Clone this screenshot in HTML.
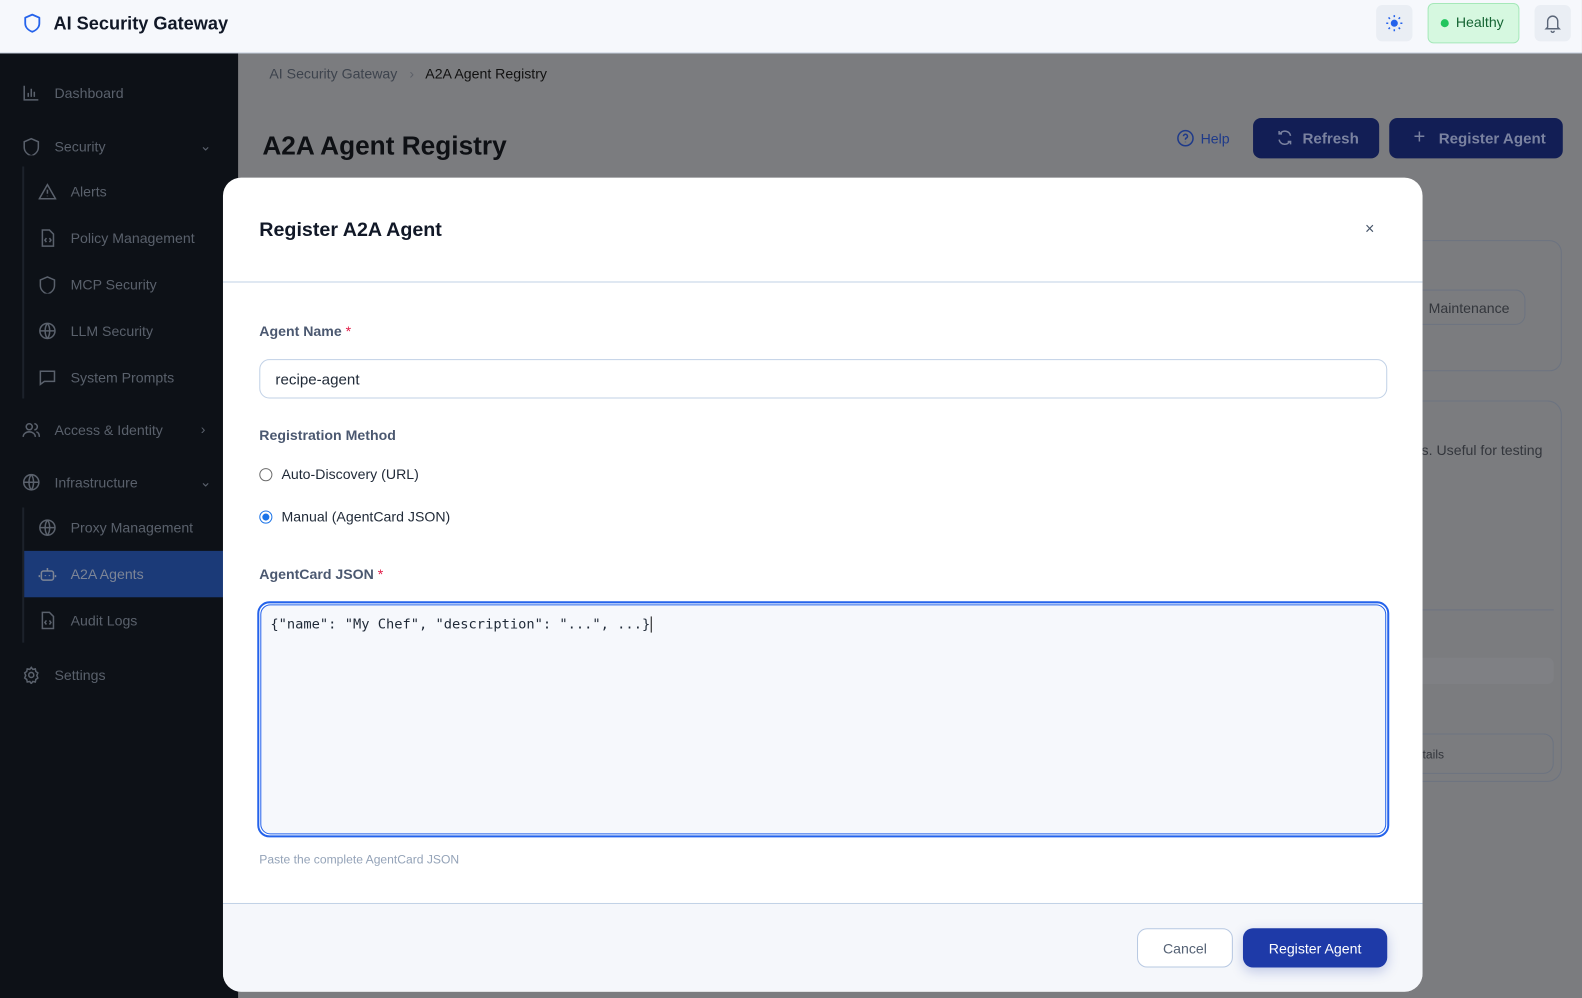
<!DOCTYPE html>
<html><head><meta charset="utf-8"><style>
*{box-sizing:border-box;margin:0;padding:0}
html,body{width:1582px;height:998px;overflow:hidden;background:#7b7c7f}
#w{width:1568px;height:990px;transform:scale(1.0089);transform-origin:0 0;font-family:"Liberation Sans",sans-serif;position:relative}
.a{position:absolute}
.top{left:0;top:0;width:1568px;height:53px;background:#f6f8fc;border-bottom:1px solid #c5cfdd}
.side{left:0;top:53px;width:236px;height:945px;background:#0d1117}
.si{position:absolute;font-size:14px;color:#5a616c;display:flex;align-items:center;gap:14px}
.si svg{width:18px;height:18px;stroke:#5a616c;fill:none;stroke-width:1.5}
.vl{position:absolute;left:22px;width:2px;background:#1c222b}
.modal{left:221px;top:176px;width:1189px;height:807px;background:#fff;border-radius:18px;overflow:hidden}
.lbl{position:absolute;left:36px;font-size:14px;font-weight:bold;color:#4b5870}
.lbl b{color:#e11d48;font-weight:normal}
</style></head><body><div id="w">
<div class="a top">
 <svg class="a" style="left:23px;top:13px" width="18" height="20" viewBox="0 0 18 20"><path d="M9 1.5 L16 4.5 V10 C16 14 13 17 9 18.5 C5 17 2 14 2 10 V4.5 Z" fill="none" stroke="#2563eb" stroke-width="1.8" stroke-linejoin="round"/></svg>
 <div class="a" style="left:53px;top:13px;font-size:18px;font-weight:bold;color:#111827">AI Security Gateway</div>
 <div class="a" style="left:1364px;top:5px;width:36px;height:36px;border-radius:6px;background:#eaeef4"></div>
 <svg class="a" style="left:1373px;top:14px" width="18" height="18" viewBox="0 0 18 18"><circle cx="9" cy="9" r="3.5" fill="#2563eb"/><g stroke="#2563eb" stroke-width="1.5"><path d="M9 1v2M9 15v2M1 9h2M15 9h2M3.3 3.3l1.4 1.4M13.3 13.3l1.4 1.4M3.3 14.7l1.4-1.4M13.3 4.7l1.4-1.4"/></g></svg>
 <div class="a" style="left:1415px;top:3px;width:91px;height:40px;border-radius:6px;background:#d6f8e0;border:1px solid #a5e8b9"></div>
 <div class="a" style="left:1428px;top:19px;width:8px;height:8px;border-radius:50%;background:#22c55e"></div>
 <div class="a" style="left:1443px;top:14px;font-size:14px;color:#166534">Healthy</div>
 <div class="a" style="left:1521px;top:5px;width:36px;height:36px;border-radius:6px;background:#eaeef4"></div>
 <svg class="a" style="left:1530px;top:13px" width="18" height="20" viewBox="0 0 18 20" fill="none" stroke="#5b6678" stroke-width="1.4"><path d="M4 14V8a5 5 0 0 1 10 0v6l1.5 1.5h-13Z"/><path d="M7.5 17.5a1.5 1.5 0 0 0 3 0"/></svg>
</div>
<div class="a side">
 <div class="vl" style="top:112px;height:230px"></div>
 <div class="vl" style="top:450px;height:134px"></div>
 <div class="a" style="left:24px;top:493px;width:212px;height:46px;background:#1b3a78"></div>
 <div class="si" style="left:22px;top:30px"><svg viewBox="0 0 18 18"><path d="M2 2v14h14M6 13V9M9 13V5M12 13V8"/></svg>Dashboard</div>
 <div class="si" style="left:22px;top:83px"><svg viewBox="0 0 18 18"><path d="M9 1.5 16 4.5V10c0 4-3 7-7 8.5C5 17 2 14 2 10V4.5Z"/></svg>Security</div>
 <div class="si" style="left:198px;top:83px">⌄</div>
 <div class="si" style="left:38px;top:128px"><svg viewBox="0 0 18 18"><path d="M9 2 17 16H1Z M9 7v4M9 13v.5"/></svg>Alerts</div>
 <div class="si" style="left:38px;top:174px"><svg viewBox="0 0 18 18"><path d="M4 1h7l4 4v12H4Z M8 9l-1.5 2L8 13M11 9l1.5 2L11 13"/></svg>Policy Management</div>
 <div class="si" style="left:38px;top:220px"><svg viewBox="0 0 18 18"><path d="M9 1.5 16 4.5V10c0 4-3 7-7 8.5C5 17 2 14 2 10V4.5Z"/></svg>MCP Security</div>
 <div class="si" style="left:38px;top:266px"><svg viewBox="0 0 18 18"><circle cx="9" cy="9" r="7.5"/><path d="M1.5 9h15M9 1.5c3 3.5 3 11.5 0 15M9 1.5c-3 3.5-3 11.5 0 15"/></svg>LLM Security</div>
 <div class="si" style="left:38px;top:312px"><svg viewBox="0 0 18 18"><path d="M2 3h14v10H6l-4 3Z"/></svg>System Prompts</div>
 <div class="si" style="left:22px;top:364px"><svg viewBox="0 0 18 18"><circle cx="7" cy="6" r="3"/><path d="M1 16c0-3 3-5 6-5s6 2 6 5M12 3a3 3 0 0 1 0 6M14 11c2 .5 3 2.5 3 5"/></svg>Access &amp; Identity</div>
 <div class="si" style="left:199px;top:364px">›</div>
 <div class="si" style="left:22px;top:416px"><svg viewBox="0 0 18 18"><circle cx="9" cy="9" r="7.5"/><path d="M1.5 9h15M9 1.5c3 3.5 3 11.5 0 15M9 1.5c-3 3.5-3 11.5 0 15"/></svg>Infrastructure</div>
 <div class="si" style="left:198px;top:416px">⌄</div>
 <div class="si" style="left:38px;top:461px"><svg viewBox="0 0 18 18"><circle cx="9" cy="9" r="7.5"/><path d="M1.5 9h15M9 1.5c3 3.5 3 11.5 0 15M9 1.5c-3 3.5-3 11.5 0 15"/></svg>Proxy Management</div>
 <div class="si" style="left:38px;top:507px;color:#7d8596"><svg viewBox="0 0 18 18" style="stroke:#7d8596"><rect x="3" y="6" width="12" height="9" rx="2"/><path d="M9 3v3M1 10v2M17 10v2M7 10v1M11 10v1"/></svg>A2A Agents</div>
 <div class="si" style="left:38px;top:553px"><svg viewBox="0 0 18 18"><path d="M4 1h7l4 4v12H4Z M8 9l-1.5 2L8 13M11 9l1.5 2L11 13"/></svg>Audit Logs</div>
 <div class="si" style="left:22px;top:607px"><svg viewBox="0 0 18 18"><circle cx="9" cy="9" r="2.5"/><path d="M9 1.5l1.5 2 2.5-.5.5 2.5 2 1.5-1 2.5 1 2.5-2 1.5-.5 2.5-2.5-.5-1.5 2-1.5-2-2.5.5-.5-2.5-2-1.5 1-2.5-1-2.5 2-1.5.5-2.5 2.5.5Z"/></svg>Settings</div>
</div>
<div class="a" style="left:267px;top:65px;font-size:14px;color:#3d434d">AI Security Gateway <span style="color:#5c6068;margin:0 8px">›</span> <span style="color:#111">A2A Agent Registry</span></div>
<div class="a" style="left:260px;top:129px;font-size:26px;font-weight:bold;color:#0e1014">A2A Agent Registry</div>
<svg class="a" style="left:1166px;top:128px" width="18" height="18" viewBox="0 0 18 18" fill="none" stroke="#1e3a8a" stroke-width="1.5"><circle cx="9" cy="9" r="7.5"/><path d="M7 7a2 2 0 1 1 2.5 2c-.5.2-.5.7-.5 1.5M9 12.5v.5"/></svg>
<div class="a" style="left:1190px;top:129px;font-size:14px;color:#1e3a8a">Help</div>
<div class="a" style="left:1242px;top:117px;width:125px;height:40px;border-radius:8px;background:#121e55"></div>
<div class="a" style="left:1291px;top:129px;font-size:15px;font-weight:bold;color:#7a82a0">Refresh</div>
<svg class="a" style="left:1265px;top:128px" width="17" height="17" viewBox="0 0 18 18" fill="none" stroke="#7a82a0" stroke-width="1.6"><path d="M15 7a6 6 0 0 0-11-2M3 2v3h3M3 11a6 6 0 0 0 11 2M15 16v-3h-3"/></svg>
<div class="a" style="left:1377px;top:117px;width:172px;height:40px;border-radius:8px;background:#121e55"></div>
<div class="a" style="left:1401px;top:125px;font-size:20px;color:#7a82a0">+</div>
<div class="a" style="left:1426px;top:129px;font-size:15px;font-weight:bold;color:#7a82a0">Register Agent</div>
<div class="a" style="left:1380px;top:238px;width:168px;height:130px;border:1px solid #6c7380;border-radius:12px"></div>
<div class="a" style="left:1380px;top:287px;width:132px;height:35px;border:1px solid #6c7380;border-radius:10px"></div>
<div class="a" style="left:1416px;top:297px;font-size:14px;color:#33363c">Maintenance</div>
<div class="a" style="left:1380px;top:397px;width:168px;height:378px;border:1px solid #6c7380;border-radius:14px"></div>
<div class="a" style="left:1409px;top:438px;font-size:14px;color:#33363c">s. Useful for testing</div>
<div class="a" style="left:1400px;top:604px;width:140px;height:1px;background:#6c7380"></div>
<div class="a" style="left:1400px;top:652px;width:140px;height:26px;border-radius:6px;background:#7f8084"></div>
<div class="a" style="left:1380px;top:727px;width:160px;height:40px;border:1px solid #6c7380;border-radius:10px"></div>
<div class="a" style="left:1410px;top:741px;font-size:12px;color:#33363c">tails</div>

<div class="a modal">
 <div class="a" style="left:36px;top:41px;font-size:19.5px;font-weight:bold;color:#111827">Register A2A Agent</div>
 <div class="a" style="left:1132px;top:43px;font-size:16px;color:#475569">×</div>
 <div class="a" style="left:0;top:103px;width:1189px;height:1px;background:#c1d1e6"></div>
 <div class="lbl" style="top:144px">Agent Name <b>*</b></div>
 <div class="a" style="left:36px;top:180px;width:1118px;height:39px;border:1px solid #c1d1e6;border-radius:10px"></div>
 <div class="a" style="left:52px;top:192px;font-size:15px;color:#1f2937">recipe-agent</div>
 <div class="lbl" style="top:247px">Registration Method</div>
 <div class="a" style="left:36px;top:288px;width:13px;height:13px;border:1px solid #6b6b6b;border-radius:50%"></div>
 <div class="a" style="left:58px;top:286px;font-size:14px;color:#1f2937">Auto-Discovery (URL)</div>
 <div class="a" style="left:36px;top:330px;width:13px;height:13px;border:1px solid #1a73e8;border-radius:50%;background:#fff"><div style="margin:2px;width:7px;height:7px;border-radius:50%;background:#1a73e8"></div></div>
 <div class="a" style="left:58px;top:328px;font-size:14px;color:#1f2937">Manual (AgentCard JSON)</div>
 <div class="lbl" style="top:385px">AgentCard JSON <b>*</b></div>
 <div class="a" style="left:34px;top:420px;width:1122px;height:234px;border:2px solid #2563eb;border-radius:12px;padding:1px"><div style="width:100%;height:100%;border:1px solid #2563eb;border-radius:10px;background:#f6f8fc"></div></div>
 <div class="a" style="left:47px;top:435px;font-family:'DejaVu Sans Mono','Liberation Mono',monospace;font-size:13.6px;color:#1f2937">{"name": "My Chef", "description": "...", ...}<span style="border-left:1px solid #111;margin-left:1px"></span></div>
 <div class="a" style="left:36px;top:669px;font-size:12px;color:#94a3b8">Paste the complete AgentCard JSON</div>
 <div class="a" style="left:0;top:719px;width:1189px;height:88px;background:#f5f7fb;border-top:1px solid #c1d1e6"></div>
 <div class="a" style="left:906px;top:744px;width:95px;height:39px;border:1px solid #b7c8e2;border-radius:10px;background:#fff;font-size:14px;color:#556275;display:flex;align-items:center;justify-content:center">Cancel</div>
 <div class="a" style="left:1011px;top:744px;width:143px;height:39px;border-radius:10px;background:#1e3aa8;font-size:14px;color:#fff;display:flex;align-items:center;justify-content:center;box-shadow:0 4px 12px rgba(30,58,168,.25)">Register Agent</div>
</div>
</div></body></html>
